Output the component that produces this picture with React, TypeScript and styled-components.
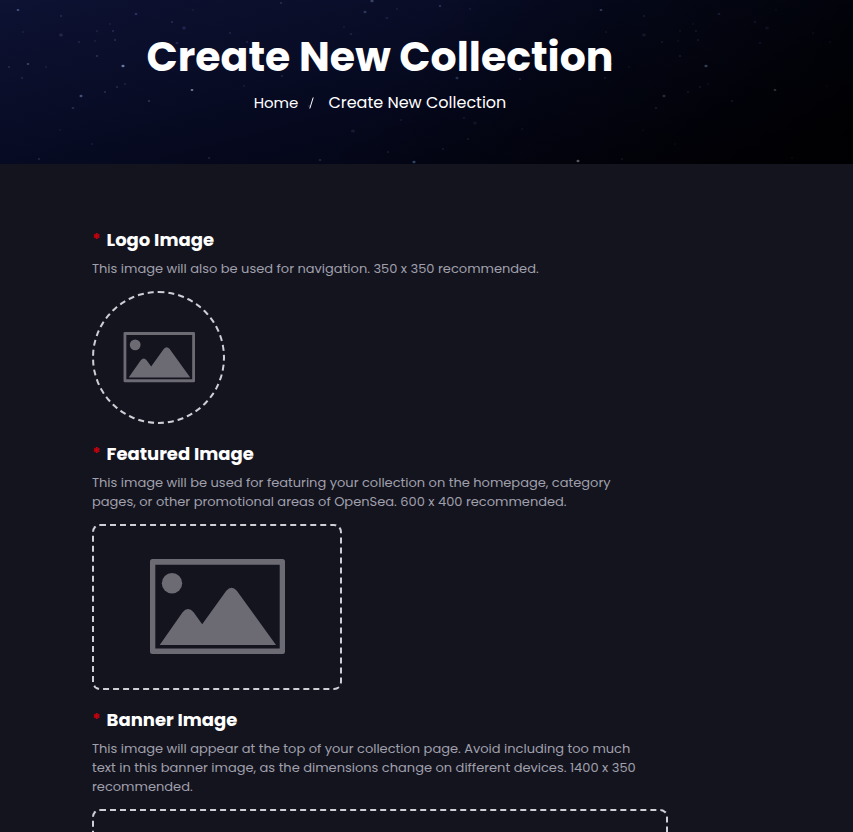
import React, { useId } from "react";
import styled, { createGlobalStyle } from "styled-components";

const GlobalStyle = createGlobalStyle`
  *, *::before, *::after { box-sizing: border-box; }
  body {
    margin: 0;
    background: #14141f;
    color: #fff;
    font-family: Poppins, Inter, "Liberation Sans", sans-serif;
    overflow-x: hidden;
  }
`;

const Hero = styled.header`
  position: relative;
  padding: 32px 0 48px;
  background: linear-gradient(165deg, #0e1233 0%, #070b23 40%, #040617 70%, #010109 100%);
  overflow: hidden;
`;

const Sky = styled.svg`
  position: absolute;
  inset: 0;
  width: 100%;
  height: 100%;
  opacity: 0.7;
`;

const Shade = styled.div`
  position: absolute;
  inset: 0;
  background: linear-gradient(125deg, transparent 45%, rgba(0, 0, 0, 0.8) 100%);
`;

const Column = styled.div`
  position: relative;
  max-width: 760px;
`;

const Title = styled.h1`
  margin: 0;
  font-size: 41px;
  line-height: 50px;
  font-weight: 700;
  text-align: center;
`;

const Breadcrumbs = styled.ol`
  display: flex;
  justify-content: center;
  gap: 14px;
  margin: 8px 0 0;
  padding: 0;
  list-style: none;
  font-size: 16px;
  line-height: 26px;
`;

const Crumb = styled.li`
  display: flex;
  align-items: center;
  gap: 11px;
`;

const CrumbLink = styled.a`
  color: #fff;
  font-size: 15px;
  text-decoration: none;
`;

const Slash = styled.svg`
  width: 5px;
  height: 12px;
`;

const Form = styled.form`
  display: flex;
  flex-direction: column;
  gap: 16px;
  max-width: 576px;
  margin: 0 auto;
  padding: 62px 0 48px;
`;

const Field = styled.section`
  display: flex;
  flex-direction: column;
  align-items: flex-start;
`;

const FieldLabel = styled.label`
  display: flex;
  gap: 6px;
  font-size: 18px;
  line-height: 28px;
  font-weight: 700;
`;

const Required = styled.span`
  color: #c8000a;
  font-size: 16px;
`;

const Hint = styled.p`
  margin: 5px 0 13px;
  color: #a0a0ac;
  font-size: 13px;
  line-height: 19px;
`;

type Shape = "circle" | "card" | "banner";

const widths: Record<Shape, string> = { circle: "133px", card: "250px", banner: "100%" };
const heights: Record<Shape, string> = { circle: "133px", card: "166px", banner: "200px" };

const DropZone = styled.label<{ $shape: Shape }>`
  position: relative;
  display: flex;
  align-items: center;
  justify-content: center;
  width: ${(p) => widths[p.$shape]};
  height: ${(p) => heights[p.$shape]};
  border: 2px dashed #cfcfd6;
  border-radius: ${(p) => (p.$shape === "circle" ? "50%" : "8px")};
  cursor: pointer;
`;

const FileInput = styled.input`
  position: absolute;
  inset: 0;
  width: 100%;
  height: 100%;
  opacity: 0;
  cursor: pointer;
`;

const Picture = styled.svg<{ $small: boolean }>`
  width: ${(p) => (p.$small ? "72px" : "136px")};
  fill: #6c6b74;
`;

const stars: [number, number, number, string, number][] = [
  [18, 10, 1.4, "#6f86b8", 0.8],
  [61, 16, 1.2, "#5a6aa0", 0.4],
  [136, 14, 1.4, "#4a55b0", 0.7],
  [172, 22, 1.2, "#4f5fa0", 0.5],
  [184, 28, 1.8, "#4a5496", 0.5],
  [61, 35, 1.8, "#55608f", 0.45],
  [23, 32, 1, "#55608f", 0.4],
  [97, 31, 1, "#55608f", 0.5],
  [110, 24, 1, "#55608f", 0.35],
  [113, 31, 1.1, "#55608f", 0.5],
  [115, 40, 1.1, "#55608f", 0.5],
  [95, 41, 1, "#55608f", 0.4],
  [79, 42, 1.2, "#55608f", 0.4],
  [97, 56, 1.2, "#5b6e9d", 0.5],
  [28, 64, 1.3, "#6478a6", 0.7],
  [9, 67, 1.1, "#55608f", 0.5],
  [46, 67, 1, "#55608f", 0.4],
  [22, 78, 1.2, "#55608f", 0.4],
  [123, 66, 1.6, "#8ba6d4", 1],
  [192, 90, 1.4, "#a3b2c9", 1],
  [81, 96, 1.5, "#6c7fae", 0.85],
  [105, 92, 1.2, "#55608f", 0.5],
  [117, 87, 1.1, "#55608f", 0.5],
  [125, 84, 1, "#55608f", 0.5],
  [149, 101, 1.2, "#6c7fae", 0.5],
  [73, 108, 1.4, "#55608f", 0.55],
  [60, 130, 1, "#55608f", 0.35],
  [92, 144, 1, "#55608f", 0.35],
  [39, 159, 1.2, "#55608f", 0.45],
  [209, 158, 1.2, "#55608f", 0.4],
  [230, 33, 1.1, "#55608f", 0.4],
  [177, 43, 1.4, "#4a5cad", 0.5],
  [193, 10, 1, "#55608f", 0.3],
  [247, 42, 1.1, "#55608f", 0.4],
  [244, 86, 1, "#55608f", 0.4],
  [282, 76, 1.2, "#55608f", 0.4],
  [281, 3, 1.2, "#55608f", 0.5],
  [372, 1, 1.6, "#7484ad", 0.65],
  [365, 12, 1.5, "#5d70a2", 0.6],
  [387, 18, 1.4, "#43539b", 0.4],
  [397, 9, 1, "#55608f", 0.4],
  [344, 27, 1, "#55608f", 0.35],
  [351, 34, 1.2, "#55608f", 0.4],
  [440, 6, 1.3, "#6c7fae", 0.5],
  [470, 9, 1, "#55608f", 0.4],
  [457, 78, 1.5, "#4468a0", 0.7],
  [520, 79, 1.1, "#55608f", 0.4],
  [353, 131, 2, "#55608f", 0.3],
  [309, 106, 1, "#6c7fae", 0.6],
  [401, 120, 1, "#55608f", 0.4],
  [388, 152, 1.1, "#55608f", 0.35],
  [464, 118, 1.3, "#55608f", 0.3],
  [475, 123, 2, "#55608f", 0.25],
  [468, 139, 1.4, "#55608f", 0.3],
  [522, 129, 1, "#55608f", 0.35],
  [443, 149, 1.1, "#55608f", 0.35],
  [320, 160, 1.3, "#55608f", 0.5],
  [414, 162, 1.6, "#4d7ab5", 0.9],
  [578, 161, 1.5, "#c8ccd0", 1],
];

function StarField() {
  return (
    <Sky aria-hidden="true">
      <defs>
        <pattern id="stars" width="583" height="340" patternUnits="userSpaceOnUse">
          {stars.map(([x, y, r, color, opacity], i) => (
            <ellipse key={i} cx={x} cy={y} rx={r} ry={r * 0.8} fill={color} opacity={opacity} />
          ))}
        </pattern>
      </defs>
      <rect width="100%" height="100%" fill="url(#stars)" />
    </Sky>
  );
}

function PictureIcon({ small = false }: { small?: boolean }) {
  return (
    <Picture $small={small} viewBox="0 0 136 96" aria-hidden="true">
      <path
        fillRule="evenodd"
        d="M3.500 0H133.500Q136 0 136 2.500V92.500Q136 95 133.500 95H3.500Q1 95 1 92.500V2.500Q1 0 3.500 0ZM6.300 5.700V89.500H130.700V5.700Z"
      />
      <circle cx="23" cy="24.300" r="10.200" />
      <path d="M10.700 86L33.600 53.200Q39 46.800 44.600 53.200L53.200 65.200L77.300 31.800Q82.500 25.600 87.800 31.800L127 86Z" />
    </Picture>
  );
}

interface UploadProps {
  title: string;
  shape: Shape;
  children: React.ReactNode;
}

function UploadField({ title, shape, children }: UploadProps) {
  const id = useId();
  return (
    <Field>
      <FieldLabel htmlFor={id}>
        <Required>*</Required>
        {title}
      </FieldLabel>
      <Hint id={`${id}-hint`}>{children}</Hint>
      <DropZone $shape={shape}>
        <PictureIcon small={shape === "circle"} />
        <FileInput id={id} type="file" accept="image/*" required aria-describedby={`${id}-hint`} />
      </DropZone>
    </Field>
  );
}

export default function App() {
  return (
    <>
      <GlobalStyle />
      <Hero>
        <StarField />
        <Shade />
        <Column>
          <Title>Create New Collection</Title>
          <nav aria-label="Breadcrumb">
            <Breadcrumbs>
              <Crumb>
                <CrumbLink href="#home">Home</CrumbLink>
                <Slash viewBox="0 0 5 12" aria-hidden="true">
                  <path d="M4.200 0.500L0.800 11.500" stroke="#fff" fill="none" />
                </Slash>
              </Crumb>
              <Crumb aria-current="page">Create New Collection</Crumb>
            </Breadcrumbs>
          </nav>
        </Column>
      </Hero>
      <main>
        <Column>
          <Form>
            <UploadField title="Logo Image" shape="circle">
              This image will also be used for navigation. 350 x 350 recommended.
            </UploadField>
            <UploadField title="Featured Image" shape="card">
              This image will be used for featuring your collection on the homepage, category
              <br />
              pages, or other promotional areas of OpenSea. 600 x 400 recommended.
            </UploadField>
            <UploadField title="Banner Image" shape="banner">
              This image will appear at the top of your collection page. Avoid including too much
              <br />
              text in this banner image, as the dimensions change on different devices. 1400 x 350
              <br />
              recommended.
            </UploadField>
          </Form>
        </Column>
      </main>
    </>
  );
}
